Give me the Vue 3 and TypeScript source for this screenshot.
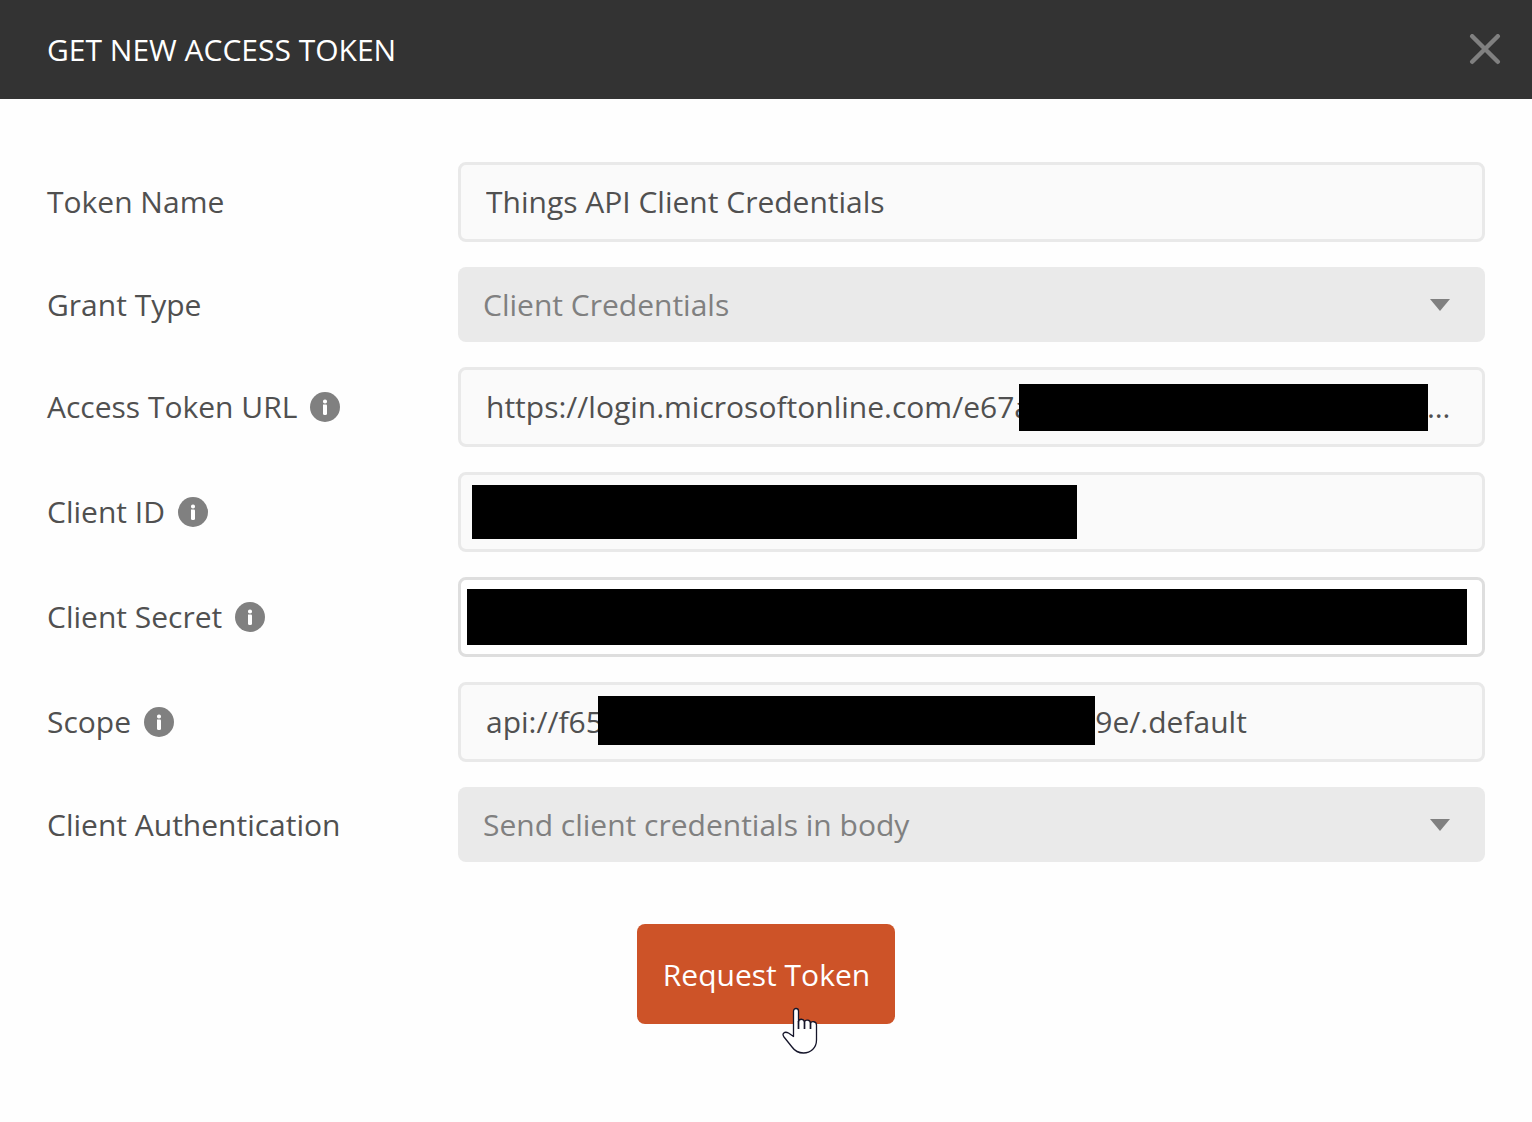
<script setup lang="ts">
import { ref } from 'vue'

interface Field {
  id: string
  label: string
  kind: 'text' | 'select'
  value: string
  info?: boolean
  mask?: boolean
  active?: boolean
}

const fields = ref<Field[]>([
  { id: 'token-name', label: 'Token Name', kind: 'text', value: 'Things API Client Credentials' },
  { id: 'grant-type', label: 'Grant Type', kind: 'select', value: 'Client Credentials' },
  {
    id: 'token-url',
    label: 'Access Token URL',
    kind: 'text',
    value: 'https://login.microsoftonline.com/e67a000c-0000-0000-0000-000000000000/oauth2/v2.0/token',
    info: true,
    mask: true,
  },
  { id: 'client-id', label: 'Client ID', kind: 'text', value: '', info: true, mask: true },
  { id: 'client-secret', label: 'Client Secret', kind: 'text', value: '', info: true, mask: true, active: true },
  {
    id: 'scope',
    label: 'Scope',
    kind: 'text',
    value: 'api://f6500c0a-00c0-000a-0c00-00000000009e/.default',
    info: true,
    mask: true,
  },
  { id: 'client-auth', label: 'Client Authentication', kind: 'select', value: 'Send client credentials in body' },
])
</script>

<template>
  <section class="dialog" aria-labelledby="dialog-title">
    <header class="header">
      <h1 id="dialog-title" class="title">GET NEW ACCESS TOKEN</h1>
      <button class="close" type="button" aria-label="Close">
        <svg width="32" height="32" viewBox="0 0 32 32" aria-hidden="true">
          <path d="M3.200 2.200L28.800 27.800M28.800 2.200L3.200 27.800" fill="none" stroke="#808080" stroke-width="4.400" stroke-linecap="round" />
        </svg>
      </button>
    </header>

    <form class="form" @submit.prevent>
      <div v-for="field in fields" :key="field.id" class="row">
        <div class="label-cell">
          <label :for="field.id">{{ field.label }}</label>
          <svg v-if="field.info" class="info" width="30" height="30" viewBox="0 0 30 30" aria-hidden="true">
            <circle cx="15" cy="15" r="15" fill="#808080" />
            <rect x="13" y="7.500" width="4" height="4" rx="1.800" fill="#fff" />
            <path d="M13 12.500H16A1 1 0 0 1 17 13.500V21.500A1.500 1.500 0 0 1 15.500 23H14.500A1.500 1.500 0 0 1 13 21.500Z" fill="#fff" />
          </svg>
        </div>
        <div class="control">
          <template v-if="field.kind === 'select'">
            <select :id="field.id" v-model="field.value" class="select">
              <option>{{ field.value }}</option>
            </select>
            <svg class="arrow" width="20" height="12" viewBox="0 0 20 12" aria-hidden="true">
              <path d="M0 0H20L10 12Z" fill="#808080" />
            </svg>
          </template>
          <input
            v-else
            :id="field.id"
            v-model="field.value"
            class="input"
            :class="{ active: field.active }"
            type="text"
            spellcheck="false"
          />
          <span v-if="field.mask" class="mask" :class="'mask-' + field.id"></span>
        </div>
      </div>

      <div class="actions">
        <button class="submit" type="submit">
          Request Token
          <svg class="pointer" width="36" height="48" viewBox="0 0 36 48" aria-hidden="true">
            <path
              d="M11.500 29.500V4a2.500 2.500 0 0 1 5 0V14.500C17 11.500 21.500 11.500 22.500 14.500C23.500 12.500 28 12.500 28.500 16C29.500 14 34.500 14 34.500 18V33C34.500 41 28.500 46 21.500 46C16 46 12.500 43.500 10 40L2 30C-.5 26.500 2.500 24 6.500 26Z"
              fill="#fff"
              stroke="#15152a"
              stroke-width="1.300"
              stroke-linejoin="round"
            />
            <path d="M16.500 14V22M22.500 14V22M28.500 15.500V22" fill="none" stroke="#15152a" stroke-width="1.700" />
          </svg>
        </button>
      </div>
    </form>
  </section>
</template>

<style>
body {
  margin: 0;
  background: #fefefe;
}
</style>

<style scoped>
.dialog {
  font-family: 'Open Sans', 'Noto Sans', sans-serif;
  font-size: 30px;
  line-height: 40px;
  color: #505050;
}

.header {
  display: flex;
  align-items: center;
  justify-content: space-between;
  box-sizing: border-box;
  height: 99px;
  padding: 0 31px 0 47px;
  background: #333;
}

.title {
  margin: 0;
  font-size: 30px;
  font-weight: 400;
  color: #fff;
}

.close {
  display: flex;
  padding: 0;
  border: 0;
  background: none;
}

.form {
  display: flex;
  flex-direction: column;
  gap: 25px;
  padding: 63px 47px 98px;
}

.row {
  display: flex;
  align-items: center;
}

.label-cell {
  display: flex;
  align-items: center;
  gap: 13px;
  flex: 0 0 411px;
}

.control {
  position: relative;
  display: flex;
  flex: 1;
  min-width: 0;
}

.input,
.select {
  box-sizing: border-box;
  width: 100%;
  margin: 0;
  border-radius: 8px;
  font: inherit;
  outline: none;
}

.input {
  height: 80px;
  padding: 0 25px 2px;
  border: 3px solid #e9e9e9;
  background: #fafafa;
  color: #505050;
  text-overflow: ellipsis;
}

.input.active {
  border-color: #dedede;
  background: #fff;
}

.select {
  height: 75px;
  padding: 0 60px 0 25px;
  border: 0;
  appearance: none;
  background: #eaeaea;
  color: #808080;
}

.arrow {
  position: absolute;
  top: 32px;
  right: 35px;
  pointer-events: none;
}

.mask {
  position: absolute;
  background: #000;
}

.mask-token-url {
  top: 17px;
  right: 57px;
  width: 409px;
  height: 47px;
}

.mask-client-id {
  top: 13px;
  left: 14px;
  width: 605px;
  height: 54px;
}

.mask-client-secret {
  top: 12px;
  left: 9px;
  right: 18px;
  height: 56px;
}

.mask-scope {
  top: 14px;
  left: 140px;
  width: 497px;
  height: 49px;
}

.actions {
  display: flex;
  justify-content: center;
  padding-top: 37px;
}

.submit {
  position: relative;
  height: 100px;
  padding: 2px 25px 0 26px;
  border: 0;
  border-radius: 8px;
  background: #cd5328;
  color: #fff;
  font: inherit;
}

.pointer {
  position: absolute;
  right: 77px;
  bottom: -31px;
}
</style>
